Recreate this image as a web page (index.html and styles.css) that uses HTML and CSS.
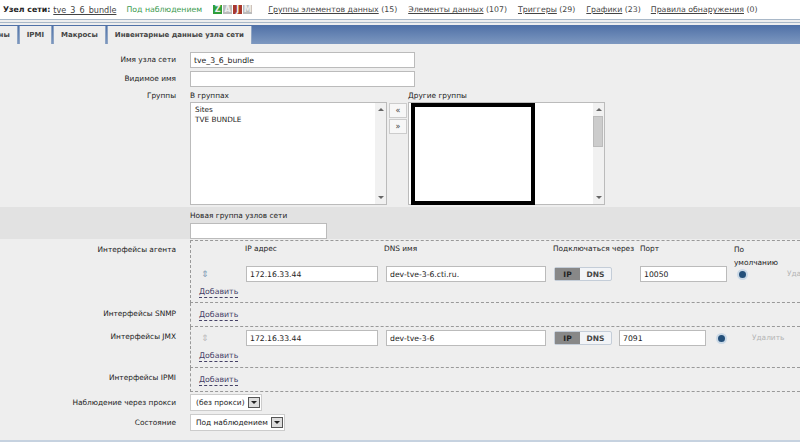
FILE: index.html
```html
<!DOCTYPE html>
<html>
<head>
    <meta charset="utf-8">
    <title>Узел сети</title>
    <link rel="stylesheet" href="styles.css">
</head>
<body>
    <div class="host-bar">
        <b class="host-title">Узел сети:</b>
        <a class="host-link">tve_3_6_bundle</a>
        <span class="host-status">Под наблюдением</span>
        <span class="avail">
            <i class="avail-z">Z</i><i class="avail-off">A</i><i class="avail-red">J</i><i class="avail-off">M</i>
        </span>
        <span class="item-groups"><a>Группы элементов данных</a> (15)</span>
        <span class="item-items"><a>Элементы данных</a> (107)</span>
        <span class="item-triggers"><a>Триггеры</a> (29)</span>
        <span class="item-graphs"><a>Графики</a> (23)</span>
        <span class="item-rules"><a>Правила обнаружения</a> (0)</span>
    </div>
    <div class="tab-bar">
        <div class="tabs">
            <span class="tab">Шаблоны</span>
            <span class="tab">IPMI</span>
            <span class="tab">Макросы</span>
            <span class="tab">Инвентарные данные узла сети</span>
        </div>
    </div>

    <div class="form">
        <div class="row row-name">
            <label class="label">Имя узла сети</label>
            <input class="input input-wide" value="tve_3_6_bundle">
        </div>
        <div class="row row-visible">
            <label class="label">Видимое имя</label>
            <input class="input input-wide">
        </div>
        <div class="row row-groups">
            <label class="label">Группы</label>
            <div class="groups">
                <div class="group-col">
                    <div class="caption">В группах</div>
                    <div class="listbox">
                        <div class="listbox-items">
                            <div>Sites</div>
                            <div>TVE BUNDLE</div>
                        </div>
                        <div class="scroll"><span class="arrow-up"></span><span class="arrow-down"></span></div>
                    </div>
                </div>
                <div class="move-col">
                    <span class="move-btn">«</span>
                    <span class="move-btn">»</span>
                </div>
                <div class="group-col">
                    <div class="caption">Другие группы</div>
                    <div class="listbox">
                        <div class="listbox-items"></div>
                        <div class="scroll"><span class="arrow-up"></span><span class="thumb"></span><span class="arrow-down"></span></div>
                        <div class="black-box"></div>
                    </div>
                </div>
            </div>
        </div>
        <div class="row row-new-group">
            <label class="label"></label>
            <div>
                <div class="caption">Новая группа узлов сети</div>
                <input class="input input-new">
            </div>
        </div>

        <div class="row row-agent">
            <label class="label">Интерфейсы агента</label>
            <div class="iface iface-agent">
                <div class="iface-head">
                    <span class="col-ip">IP адрес</span>
                    <span class="col-dns">DNS имя</span>
                    <span class="col-conn">Подключаться через</span>
                    <span class="col-port">Порт</span>
                    <span class="col-default">По умолчанию</span>
                </div>
                <div class="iface-line">
                    <span class="drag">⇕</span>
                    <input class="input input-ip" value="172.16.33.44">
                    <input class="input input-dns" value="dev-tve-3-6.cti.ru.">
                    <span class="toggle"><b>IP</b><span>DNS</span></span>
                    <input class="input input-port" value="10050">
                    <span class="radio"></span>
                    <span class="remove remove-agent">Удалить</span>
                </div>
                <a class="add">Добавить</a>
            </div>
        </div>
        <div class="row row-snmp">
            <label class="label">Интерфейсы SNMP</label>
            <div class="iface iface-snmp"><a class="add">Добавить</a></div>
        </div>
        <div class="row row-jmx">
            <label class="label">Интерфейсы JMX</label>
            <div class="iface iface-jmx">
                <div class="iface-line">
                    <span class="drag drag-off">⇕</span>
                    <input class="input input-ip" value="172.16.33.44">
                    <input class="input input-dns" value="dev-tve-3-6">
                    <span class="toggle"><b>IP</b><span>DNS</span></span>
                    <input class="input input-port-jmx" value="7091">
                    <span class="radio"></span>
                    <span class="remove remove-jmx">Удалить</span>
                </div>
                <a class="add">Добавить</a>
            </div>
        </div>
        <div class="row row-ipmi">
            <label class="label">Интерфейсы IPMI</label>
            <div class="iface iface-ipmi"><a class="add">Добавить</a></div>
        </div>
        <div class="row row-proxy">
            <label class="label">Наблюдение через прокси</label>
            <span class="select">(без прокси)<span class="select-btn"></span></span>
        </div>
        <div class="row row-state">
            <label class="label">Состояние</label>
            <span class="select">Под наблюдением<span class="select-btn"></span></span>
        </div>
    </div>
    <div class="form-end"></div>
</body>
</html>
```

FILE: styles.css
```css
html, body {
    margin: 0;
    height: 442px;
    overflow: hidden;
}
body {
    font-family: "DejaVu Sans", Verdana, sans-serif;
    font-size: 7.4px;
    color: #222;
    background: #eee;
    width: 800px;
}
a {
    color: #444;
    text-decoration: underline;
}

/* top line */
.host-bar {
    height: 20px;
    box-sizing: border-box;
    background: #fff;
    display: flex;
    align-items: center;
    white-space: nowrap;
    font-size: 7.8px;
    color: #444;
    border-bottom: 1px solid #a9b8c8;
}
.host-title {
    margin-left: 3px;
    color: #222;
}
.host-link {
    margin-left: 3px;
    font-size: 8.1px;
}
.host-status {
    margin-left: 10px;
    color: #3c9a50;
}
.avail {
    margin-left: 11px;
    display: flex;
    gap: 1px;
}
.avail i {
    width: 9px;
    height: 9px;
    font-style: normal;
    font-weight: bold;
    font-size: 8px;
    line-height: 9px;
    text-align: center;
    color: #eee;
}
.avail-z { background: #2f9e3a; }
.avail-off { background: #bbb; }
.avail-red { background: #a8382c; }
.item-groups { margin-left: 16px; }
.item-items { margin-left: 11px; }
.item-triggers { margin-left: 11px; }
.item-graphs { margin-left: 11px; }
.item-rules { margin-left: 10px; }

/* tabs */
.tab-bar {
    height: 19px;
    margin-top: 2px;
    border-top: 1px solid #a9b8c8;
    padding-top: 2px;
    background: linear-gradient(#4a6ca4, #7d98c0);
    background-clip: content-box;
}
.tabs {
    width: 252px;
    height: 19px;
    display: flex;
    justify-content: flex-end;
    gap: 1px;
    overflow: hidden;
}
.tab {
    flex: none;
    margin-top: 1px;
    padding: 0 7px;
    line-height: 18px;
    font-size: 7px;
    font-weight: bold;
    color: #444;
    background: #eee;
    border-left: 1px solid #8fa5c4;
    border-right: 1px solid #8fa5c4;
}

/* form rows */
.row {
    display: grid;
    grid-template-columns: 190px 610px;
}
.label {
    text-align: right;
    padding-right: 14px;
}
.input {
    box-sizing: border-box;
    flex: none;
    font: 7.7px "DejaVu Sans", Verdana, sans-serif;
    color: #222;
    background: #fff;
    border: 1px solid #bbb;
    padding: 0 3px;
    height: 16px;
    margin: 0;
    outline: none;
}
.input-wide { width: 225px; }
.row-name { padding-top: 8px; line-height: 16px; }
.row-visible { padding-top: 3px; line-height: 16px; }
.row-groups { padding-top: 3px; height: 120px; line-height: 12px; box-sizing: border-box; }

.groups { display: flex; }
.caption {
    line-height: 12px;
    height: 12px;
}
.group-col { width: 197px; flex: none; }
.listbox {
    position: relative;
    height: 103px;
    box-sizing: border-box;
    background: #fff;
    border: 1px solid #bbb;
    display: flex;
}
.listbox-items {
    flex: 1;
    padding: 2px 4px;
    line-height: 10px;
    font-size: 7.3px;
}
.scroll {
    width: 11px;
    position: relative;
    background: #f1f1f1;
}
.arrow-up, .arrow-down {
    position: absolute;
    left: 3px;
    border-left: 3px solid transparent;
    border-right: 3px solid transparent;
}
.arrow-up { top: 5px; border-bottom: 3px solid #666; }
.arrow-down { bottom: 5px; border-top: 3px solid #666; }
.thumb {
    position: absolute;
    left: 0;
    top: 13px;
    width: 10px;
    height: 31px;
    background: #ccc;
    border: 1px solid #bbb;
    box-sizing: border-box;
}
.black-box {
    position: absolute;
    left: 2px;
    top: 0;
    width: 124px;
    height: 102px;
    box-sizing: border-box;
    background: #fff;
    border: 4px solid #000;
}
.move-col {
    width: 18px;
    margin: 13px 1px 0 2px;
    display: flex;
    flex-direction: column;
    gap: 1px;
}
.move-btn {
    height: 15px;
    background: #f7f7f7;
    border: 1px solid #ccc;
    box-sizing: border-box;
    text-align: center;
    line-height: 13px;
    font-size: 8px;
    color: #444;
}
.row-new-group {
    background: #e2e2e2;
    height: 32px;
    padding-top: 3px;
    box-sizing: border-box;
    margin-bottom: 1px;
}
.input-new { width: 137px; display: block; margin-top: 1px; }

/* interfaces */
.iface {
    border: 1px dashed #999;
    border-right: 0;
    box-sizing: border-box;
    padding-left: 8px;
}
.row-agent, .row-snmp, .row-jmx, .row-ipmi { line-height: 12px; }
.row-agent .label, .row-jmx .label, .row-ipmi .label { padding-top: 4px; }
.row-snmp .label { padding-top: 5px; }
.iface-agent { height: 63px; }
.iface-snmp { height: 24px; border-top: 0; padding-top: 6px; }
.iface-jmx { height: 41px; border-top: 0; padding-top: 2px; }
.iface-ipmi { height: 24px; border-top: 0; padding-top: 6px; }
.iface-head {
    position: relative;
    height: 24px;
}
.iface-head span {
    position: absolute;
    top: 2px;
}
.col-ip { left: 46px; }
.col-dns { left: 185px; }
.col-conn { left: 354px; white-space: nowrap; }
.col-port { left: 441px; }
.col-default { left: 535px; width: 50px; line-height: 13px; }
.iface-line {
    display: flex;
    align-items: center;
    height: 18px;
}
.drag {
    width: 47px;
    flex: none;
    color: #7f9db5;
    font-size: 9px;
    padding-left: 2px;
    box-sizing: border-box;
}
.drag-off { color: #bbb; }
.input-ip { width: 132px; margin-right: 8px; }
.input-dns { width: 160px; margin-right: 8px; }
.input-port { width: 87px; margin-left: 28px; }
.input-port-jmx { width: 87px; margin-left: 7px; }
.toggle {
    display: flex;
    width: 58px;
    height: 14px;
    line-height: 13px;
    box-sizing: border-box;
    border: 1px solid #c4cdd8;
    border-radius: 2px;
    font-size: 7.5px;
    font-weight: bold;
    text-align: center;
    flex: none;
    color: #444;
    background: #f2f4f7;
}
.toggle b {
    width: 25px;
    background: #888;
    color: #222;
}
.toggle span { flex: 1; }
.radio {
    width: 7px;
    height: 7px;
    border-radius: 50%;
    background: #24507a;
    border: 2px solid #cbd9e6;
    margin-left: 10px;
    flex: none;
}
.remove { color: #b5b5b5; flex: none; }
.remove-agent { margin-left: 39px; }
.remove-jmx { margin-left: 25px; }
.add {
    color: #444066;
    text-decoration: none;
    border-bottom: 1px dashed #444066;
    display: inline-block;
    line-height: 11px;
    margin-top: 3px;
    font-size: 7.8px;
}
.iface-snmp .add, .iface-ipmi .add { margin-top: 0; }

/* selects */
.row-proxy { padding-top: 2px; line-height: 17px; }
.row-state { padding-top: 3px; line-height: 17px; }
.select {
    justify-self: start;
    display: flex;
    align-items: center;
    height: 17px;
    box-sizing: border-box;
    background: #fff;
    border: 1px solid #ccc;
    padding-left: 5px;
    white-space: nowrap;
}
.select-btn {
    width: 12px;
    height: 11px;
    margin: 0 1px 0 3px;
    box-sizing: border-box;
    border: 1px solid #555;
    background: #ddd;
    display: flex;
    align-items: center;
    justify-content: center;
}
.select-btn::after {
    content: "";
    border-left: 3px solid transparent;
    border-right: 3px solid transparent;
    border-top: 3px solid #222;
}
.form-end {
    margin-top: 9px;
    height: 3px;
    background: #c6d2e0;
}
```
